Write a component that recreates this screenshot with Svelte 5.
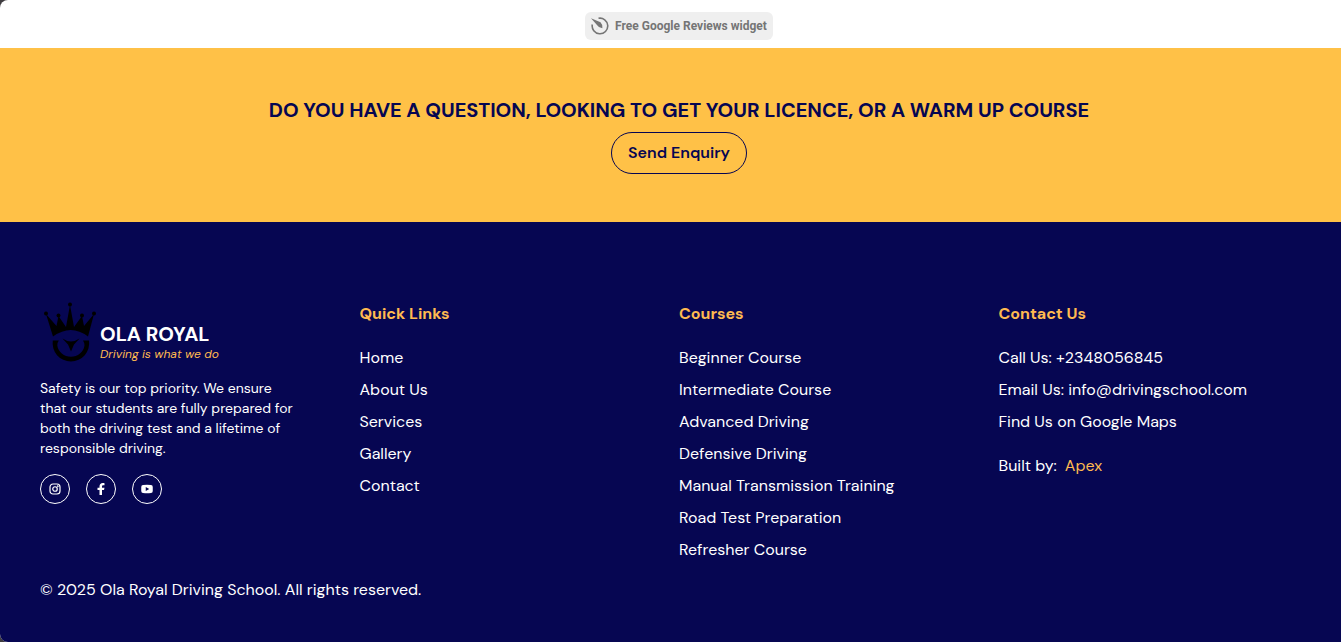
<script>
  // Closing part of the page: reviews widget badge, enquiry banner, footer.

  const quickLinks = ['Home', 'About Us', 'Services', 'Gallery', 'Contact'];
  const courses = [
    'Beginner Course',
    'Intermediate Course',
    'Advanced Driving',
    'Defensive Driving',
    'Manual Transmission Training',
    'Road Test Preparation',
    'Refresher Course',
  ];
  const contacts = [
    { label: 'Call Us: +2348056845', href: 'tel:+2348056845' },
    { label: 'Email Us: info@drivingschool.com', href: 'mailto:info@drivingschool.com' },
    { label: 'Find Us on Google Maps', href: '#map' },
  ];
</script>

<div class="page">
  <div class="reviews">
    <a class="widget" href="#reviews">
      <svg width="18" height="18" viewBox="0 0 18 18" aria-hidden="true">
        <path
          d="M7.500 1.300A7.800 7.800 0 1 1 1.300 7.500"
          fill="none"
          stroke="currentColor"
          stroke-width="1.600"
        />
        <path d="M0 1.200 9.500 5.200Q11.500 7 11.400 11.200 7.800 11 6.200 8.200Z" fill="currentColor" />
      </svg>
      <span>Free Google Reviews widget</span>
    </a>
  </div>

  <section class="enquiry">
    <h2>DO YOU HAVE A QUESTION, LOOKING TO GET YOUR LICENCE, OR A WARM UP COURSE</h2>
    <button type="button">Send Enquiry</button>
  </section>

  <footer>
    <div class="columns">
      <div class="about">
        <a class="brand" href="#home">
          <svg width="60" height="60" viewBox="0 0 60 60" aria-hidden="true">
            <circle cx="30" cy="2.500" r="2" />
            <circle cx="6" cy="11.500" r="2" />
            <circle cx="18.500" cy="13.500" r="2" />
            <circle cx="42" cy="13.500" r="2" />
            <circle cx="54" cy="11.500" r="2" />
            <path
              d="M6 12 16.500 24 18.500 14 26 25 30 3 34 25 42 14 44 24 54 12 48 34.500Q31 21.500 13 34.500Z"
            />
            <path
              d="M12.800 38.500H18.800Q17 41 17.300 43.500A13.700 12.700 0 0 0 44.500 43.500Q44.700 41 43 38.500H49A18.300 18.300 0 1 1 12.800 38.500Z"
            />
            <path d="M22.500 36.500Q31 42.500 39.500 36.500L34 42.500 31 49.500 28 42.500Z" />
          </svg>
          <span class="brand-text">
            <strong>OLA ROYAL</strong>
            <em>Driving is what we do</em>
          </span>
        </a>
        <p>
          Safety is our top priority. We ensure that our students are fully prepared for both the
          driving test and a lifetime of responsible driving.
        </p>
        <div class="social">
          <a href="#instagram" aria-label="Instagram">
            <svg width="12" height="12" viewBox="0 0 24 24" fill="none" stroke="currentColor" stroke-width="2.400">
              <rect x="2" y="2" width="20" height="20" rx="6" />
              <circle cx="12" cy="12" r="4.500" />
              <circle cx="17.500" cy="6.500" r="0.600" />
            </svg>
          </a>
          <a href="#facebook" aria-label="Facebook">
            <svg width="12" height="12" viewBox="0 0 24 24" fill="currentColor">
              <path
                d="M9 24V14H5V9.500H9V7C9 2.500 11.500 0 15.500 0c1.500 0 3 .2 3.500.4V4.500h-2c-2.200 0-3 1-3 2.800v2.200h5L18 14h-4v10Z"
              />
            </svg>
          </a>
          <a href="#youtube" aria-label="YouTube">
            <svg width="12" height="12" viewBox="0 0 24 24">
              <path
                d="M4 4Q12 3 20 4Q23.500 4.300 23.500 8V16Q23.500 19.700 20 20Q12 21 4 20Q.5 19.700.5 16V8Q.5 4.300 4 4ZM9.500 8V16L16.500 12Z"
                fill="currentColor"
                fill-rule="evenodd"
              />
            </svg>
          </a>
        </div>
      </div>

      <nav aria-label="Quick Links">
        <h3>Quick Links</h3>
        <ul>
          {#each quickLinks as link}
            <li><a href="#{link.toLowerCase().replaceAll(' ', '-')}">{link}</a></li>
          {/each}
        </ul>
      </nav>

      <nav aria-label="Courses">
        <h3>Courses</h3>
        <ul>
          {#each courses as course}
            <li><a href="#{course.toLowerCase().replaceAll(' ', '-')}">{course}</a></li>
          {/each}
        </ul>
      </nav>

      <div>
        <h3>Contact Us</h3>
        <ul>
          {#each contacts as contact}
            <li><a href={contact.href}>{contact.label}</a></li>
          {/each}
        </ul>
        <div class="credit">
          <span>Built by:</span>
          <a href="#apex">Apex</a>
        </div>
      </div>
    </div>
    <p class="copyright">© 2025 Ola Royal Driving School. All rights reserved.</p>
  </footer>
</div>

<style>
  :global(body) {
    background: #3f3c40;
    overflow-x: hidden;
  }
  .page {
    --navy: #060652;
    --amber: #ffc147;
    --amber-text: #ffba50;
    /* runs on under the scrollbar gutter */
    width: calc(100% + 17px);
    overflow: hidden;
    border-radius: 8px;
    background: #fff;
    color: #fff;
    font-family: 'DM Sans', Inter, 'Liberation Sans', sans-serif;
    font-size: 16px;
    line-height: 24px;
  }
  a {
    color: inherit;
    text-decoration: none;
  }
  h2,
  h3,
  p,
  ul {
    margin: 0;
    padding: 0;
  }
  ul {
    display: grid;
    gap: 8px;
    list-style: none;
  }

  .reviews {
    display: flex;
    justify-content: center;
    padding: 12px 0 8px;
  }
  .widget {
    display: flex;
    align-items: center;
    gap: 6px;
    padding: 2px 6px;
    border-radius: 6px;
    background: #efefef;
    color: #757575;
    font-family: Roboto, sans-serif;
    font-size: 12px;
    font-weight: 700;
  }

  .enquiry {
    display: flex;
    flex-direction: column;
    align-items: center;
    gap: 8px;
    padding: 48px 40px;
    background: var(--amber);
    color: var(--navy);
  }
  .enquiry h2 {
    font-size: 20px;
    font-weight: 700;
    line-height: 28px;
  }
  .enquiry button {
    padding: 8px 16px;
    border: 1px solid var(--navy);
    border-radius: 24px;
    background: transparent;
    color: inherit;
    font: inherit;
    font-weight: 600;
    cursor: pointer;
  }

  footer {
    padding: 80px 40px 40px;
    background: var(--navy);
  }
  .columns {
    display: grid;
    grid-template-columns: repeat(4, 1fr);
  }
  h3 {
    margin-bottom: 20px;
    color: var(--amber-text);
    font-size: 16px;
    font-weight: 700;
  }
  .brand {
    display: flex;
    align-items: flex-end;
  }
  .brand svg {
    fill: #000;
  }
  .brand-text {
    display: flex;
    flex-direction: column;
  }
  .brand strong {
    font-size: 20px;
    font-weight: 700;
  }
  .brand em {
    color: var(--amber-text);
    font-size: 12px;
    line-height: 16px;
  }
  .about p {
    max-width: 260px;
    margin: 16px 0;
    font-size: 14px;
    line-height: 20px;
  }
  .social {
    display: flex;
    gap: 16px;
  }
  .social a {
    display: grid;
    place-items: center;
    box-sizing: border-box;
    width: 30px;
    height: 30px;
    border: 1px solid #fff;
    border-radius: 50%;
  }
  .credit {
    display: flex;
    gap: 8px;
    margin-top: 20px;
  }
  .credit a {
    color: var(--amber-text);
  }
  .copyright {
    margin-top: 16px;
  }
</style>
